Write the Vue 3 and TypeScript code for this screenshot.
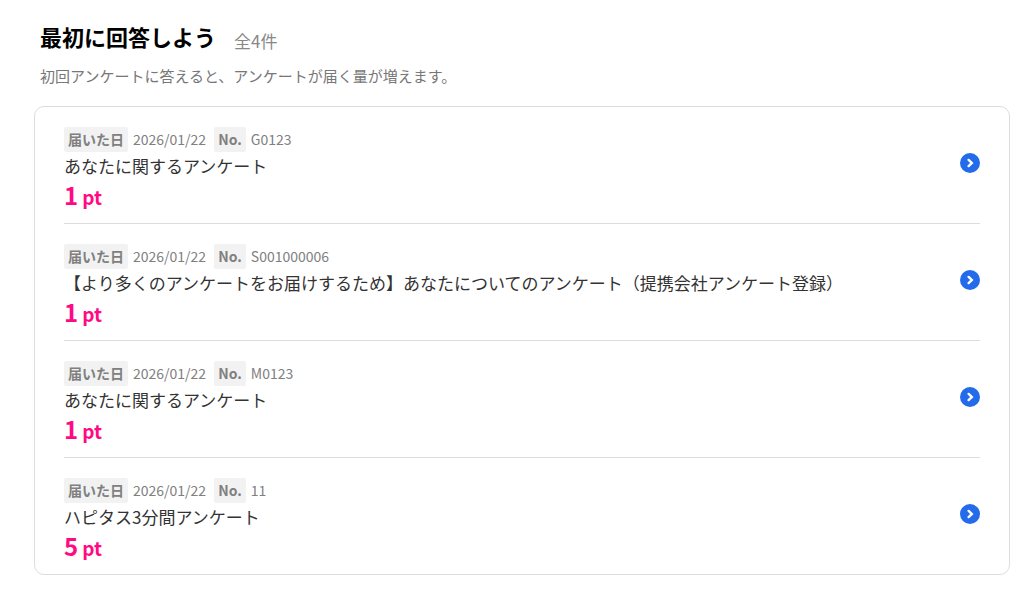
<script setup lang="ts">
interface Survey {
  date: string
  no: string
  title: string
  points: number
}

const surveys: Survey[] = [
  { date: '2026/01/22', no: 'G0123', title: 'あなたに関するアンケート', points: 1 },
  {
    date: '2026/01/22',
    no: 'S001000006',
    title: '【より多くのアンケートをお届けするため】あなたについてのアンケート（提携会社アンケート登録）',
    points: 1,
  },
  { date: '2026/01/22', no: 'M0123', title: 'あなたに関するアンケート', points: 1 },
  { date: '2026/01/22', no: '11', title: 'ハピタス3分間アンケート', points: 5 },
]
</script>

<template>
  <main class="page">
    <header class="head">
      <h1 class="heading">最初に回答しよう</h1>
      <span class="total">全{{ surveys.length }}件</span>
    </header>
    <p class="lead">初回アンケートに答えると、アンケートが届く量が増えます。</p>
    <ul class="card">
      <li v-for="survey in surveys" :key="survey.no" class="item">
        <a href="#" class="link">
          <div class="body">
            <div class="meta">
              <span class="tag">届いた日</span>
              <span class="value date">{{ survey.date }}</span>
              <span class="tag">No.</span>
              <span class="value">{{ survey.no }}</span>
            </div>
            <div class="title">{{ survey.title }}</div>
            <div class="points"><span class="num">{{ survey.points }}</span><span class="unit">pt</span></div>
          </div>
          <svg class="arrow" viewBox="0 0 20 20" aria-hidden="true">
            <circle cx="10" cy="10" r="10" fill="#236bea" />
            <path d="M8.6 6.9 11.8 10l-3.2 3.1" fill="none" stroke="#fff" stroke-width="2.4" stroke-linecap="round" />
          </svg>
        </a>
      </li>
    </ul>
  </main>
</template>

<style>
body {
  margin: 0;
  background: #fff;
}
</style>

<style scoped>
.page {
  padding: 18px 14px 16px 34px;
  font-family: "Noto Sans CJK JP", sans-serif;
  color: #333;
}
.head {
  display: flex;
  align-items: flex-end;
  gap: 18px;
  padding-left: 6px;
}
.heading {
  margin: 0;
  font-size: 22px;
  line-height: 36px;
  font-weight: 700;
  color: #000;
}
.total {
  font-size: 17px;
  line-height: 26px;
  color: #888;
}
.lead {
  margin: 10px 0 18px;
  padding-left: 6px;
  font-size: 15px;
  line-height: 24px;
  color: #777;
}
.card {
  margin: 0;
  padding: 0 29px;
  border: 1px solid #ddd;
  border-radius: 10px;
  list-style: none;
}
.item + .item {
  border-top: 1px solid #ddd;
}
.link {
  display: flex;
  align-items: center;
  justify-content: space-between;
  padding: 20px 0 11px;
  color: inherit;
  text-decoration: none;
}
.meta {
  display: flex;
  align-items: center;
  font-size: 14px;
  line-height: 25px;
  color: #808080;
}
.tag {
  padding: 0 4px;
  margin-right: 5px;
  border-radius: 2px;
  background: #f2f2f2;
  font-weight: 700;
}
.date {
  margin-right: 8px;
}
.title {
  font-size: 17px;
  line-height: 28px;
}
.points {
  display: flex;
  align-items: baseline;
  gap: 4px;
  line-height: 30px;
  font-weight: 700;
  color: #ff0a84;
}
.num {
  font-size: 24px;
}
.unit {
  font-size: 19px;
}
.arrow {
  flex: none;
  width: 20px;
  height: 20px;
  margin-bottom: 13px;
}
</style>
